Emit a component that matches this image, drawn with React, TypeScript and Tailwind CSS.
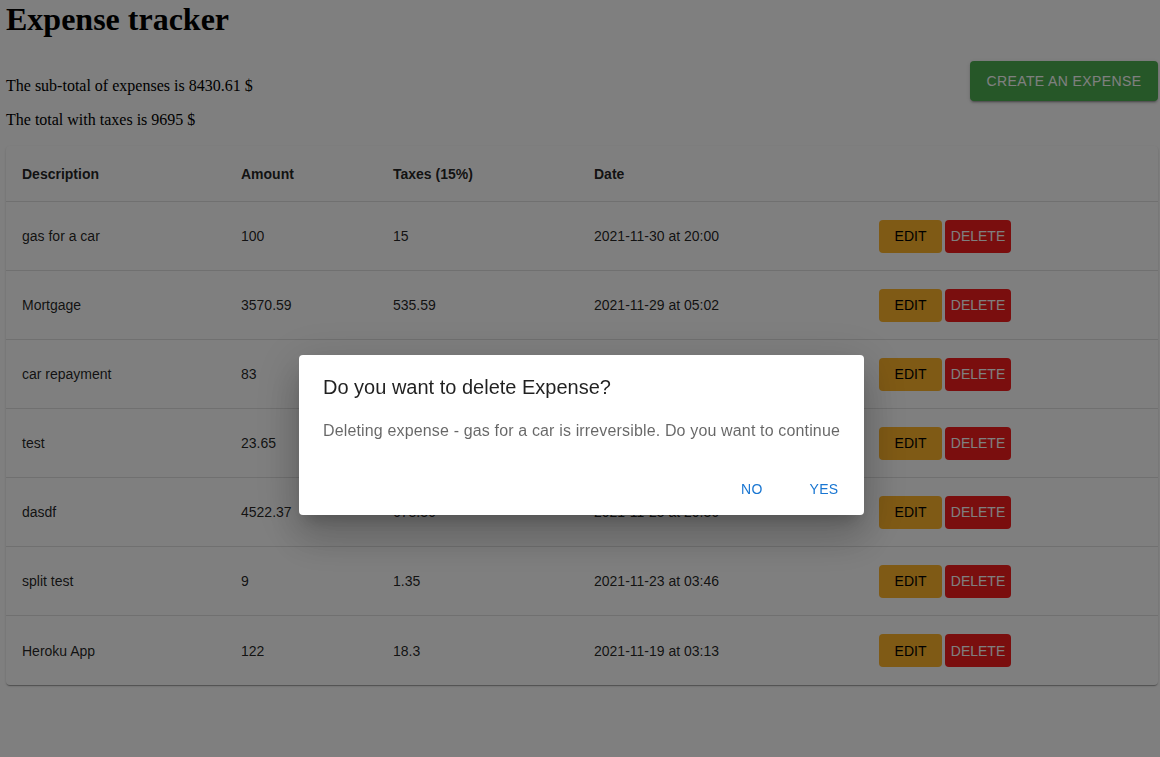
import { useState } from "react";

type Expense = {
  description: string;
  amount: string;
  taxes: string;
  date: string;
};

const expenses: Expense[] = [
  { description: "gas for a car", amount: "100", taxes: "15", date: "2021-11-30 at 20:00" },
  { description: "Mortgage", amount: "3570.59", taxes: "535.59", date: "2021-11-29 at 05:02" },
  { description: "car repayment", amount: "83", taxes: "12.45", date: "2021-11-26 at 14:20" },
  { description: "test", amount: "23.65", taxes: "3.55", date: "2021-11-25 at 10:11" },
  { description: "dasdf", amount: "4522.37", taxes: "678.36", date: "2021-11-25 at 20:36" },
  { description: "split test", amount: "9", taxes: "1.35", date: "2021-11-23 at 03:46" },
  { description: "Heroku App", amount: "122", taxes: "18.3", date: "2021-11-19 at 03:13" },
];

const gridCols = "grid grid-cols-[219px_152px_201px_285px_1fr]";

export default function App() {
  const [toDelete, setToDelete] = useState<Expense | null>(expenses[0]);

  return (
    <div className="relative min-h-[757px] bg-white font-['Liberation_Serif',serif] text-black">
      <div className="pl-[6px] pr-[2px]">
        <h1 className="m-0 h-[38px] pt-[1px] mb-[23px] text-[32px] font-bold leading-[37px]">
          Expense tracker
        </h1>

        <div className="flex items-start justify-between">
          <div>
            <p className="my-4 text-base leading-[18px]">
              The sub-total of expenses is 8430.61 $
            </p>
            <p className="my-4 text-base leading-[18px]">The total with taxes is 9695 $</p>
          </div>
          <button className="h-[40px] w-[188px] rounded bg-[#4caf50] font-['Liberation_Sans',Arial,sans-serif] text-sm font-medium uppercase tracking-[0.4px] text-white shadow-[0_3px_1px_-2px_rgba(0,0,0,0.2),0_2px_2px_0_rgba(0,0,0,0.14),0_1px_5px_0_rgba(0,0,0,0.12)]">
            Create an expense
          </button>
        </div>

        <div className="mt-[1px] rounded bg-white font-['Liberation_Sans',Arial,sans-serif] text-sm text-black/[0.87] shadow-[0_2px_1px_-1px_rgba(0,0,0,0.2),0_1px_1px_0_rgba(0,0,0,0.14),0_1px_3px_0_rgba(0,0,0,0.12)]">
          <div className={`${gridCols} h-[56px] items-center border-b border-[#e0e0e0] font-bold`}>
            <div className="px-4">Description</div>
            <div className="px-4">Amount</div>
            <div className="px-4">Taxes (15%)</div>
            <div className="px-4">Date</div>
            <div className="px-4"></div>
          </div>
          {expenses.map((e, i) => (
            <div
              key={e.description}
              className={`${gridCols} h-[69px] items-center ${
                i < expenses.length - 1 ? "border-b border-[#e0e0e0]" : ""
              }`}
            >
              <div className="px-4">{e.description}</div>
              <div className="px-4">{e.amount}</div>
              <div className="px-4">{e.taxes}</div>
              <div className="px-4">{e.date}</div>
              <div className="flex gap-[3px] px-4">
                <button className="h-[33px] w-[63px] rounded bg-[#ffb42a] text-sm uppercase text-black">
                  Edit
                </button>
                <button
                  onClick={() => setToDelete(e)}
                  className="h-[33px] w-[66px] rounded bg-[#f41c1c] text-sm uppercase text-white"
                >
                  Delete
                </button>
              </div>
            </div>
          ))}
        </div>
      </div>

      {toDelete && (
        <div className="fixed inset-0 bg-black/50">
          <div className="absolute left-[299px] top-[355px] w-[565px] rounded bg-white font-['Liberation_Sans',Arial,sans-serif] shadow-[0_11px_15px_-7px_rgba(0,0,0,0.2),0_24px_38px_3px_rgba(0,0,0,0.14),0_9px_46px_8px_rgba(0,0,0,0.12)]">
            <h2 className="px-6 pt-4 text-xl leading-8 text-black/[0.87]">
              Do you want to delete Expense?
            </h2>
            <p className="mt-4 px-6 pb-5 text-base leading-6 tracking-[0.15px] text-black/60">
              Deleting expense - {toDelete.description} is irreversible. Do you want to continue
            </p>
            <div className="flex justify-end gap-2 p-2">
              <button
                onClick={() => setToDelete(null)}
                className="h-9 min-w-16 rounded px-2 text-sm font-medium uppercase tracking-[0.4px] text-[#1976d2]"
              >
                No
              </button>
              <button
                onClick={() => setToDelete(null)}
                className="h-9 min-w-16 rounded px-2 text-sm font-medium uppercase tracking-[0.4px] text-[#1976d2]"
              >
                Yes
              </button>
            </div>
          </div>
        </div>
      )}
    </div>
  );
}
